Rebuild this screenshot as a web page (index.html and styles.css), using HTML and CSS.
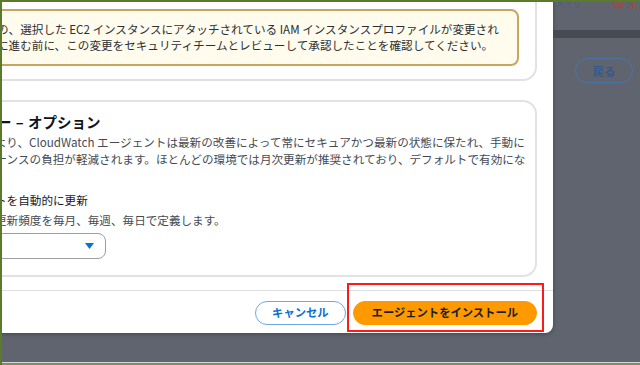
FILE: index.html
```html
<!DOCTYPE html>
<html lang="ja">
<head>
    <meta charset="UTF-8">
    <meta name="viewport" content="width=device-width, initial-scale=1.0">
    <title>エージェントのインストール</title>
    <link rel="stylesheet" href="styles.css">
</head>
<body>
    <div class="frame">
        <div class="stage">
            <!-- モーダル本体 (左側は画面外) -->
            <div class="modal">
                <div class="modal-body">
                    <div class="card card-alert">
                        <div class="alert">
                            <div class="ln">の、選択した EC2 インスタンスにアタッチされている IAM インスタンスプロファイルが変更され</div>
                            <div class="ln">に進む前に、この変更をセキュリティチームとレビューして承認したことを確認してください。</div>
                        </div>
                    </div>
                    <div class="card card-opt">
                        <h2 class="opt-title">ー – オプション</h2>
                        <p class="opt-desc">
                            <span class="ln">より、CloudWatch エージェントは最新の改善によって常にセキュアかつ最新の状態に保たれ、手動に</span>
                            <span class="ln">ナンスの負担が軽減されます。ほとんどの環境では月次更新が推奨されており、デフォルトで有効にな</span>
                        </p>
                        <div class="check-label ln">トを自動的に更新</div>
                        <div class="check-hint ln">更新頻度を毎月、毎週、毎日で定義します。</div>
                        <div class="select">
                            <svg class="caret" width="9" height="6" viewBox="0 0 9 6"><path d="M0 0h9L4.5 6z" fill="#0972d3"/></svg>
                        </div>
                    </div>
                </div>
                <div class="modal-footer">
                    <button class="btn btn-normal">キャンセル</button>
                    <button class="btn btn-primary">エージェントをインストール</button>
                    <div class="callout"></div>
                </div>
            </div>
            <!-- 背景のページ (暗くなっている) -->
            <div class="side">
                <div class="side-top">
                    <span>メイク</span>
                    <svg class="status-icon" width="12" height="12" viewBox="0 0 12 12"><circle cx="6" cy="6" r="5" fill="none" stroke="#a8453d" stroke-width="1.5"/><circle cx="6" cy="7" r="2" fill="#a8453d"/></svg>
                    <span class="status-text">未</span>
                </div>
                <div class="side-bar"></div>
                <button class="back-btn">戻る</button>
            </div>
        </div>
        <div class="frame-edge"></div>
    </div>
</body>
</html>
```

FILE: styles.css
```css
body{
    margin: 0;
    width: 640px; height: 365px; overflow: hidden;
    font-family: "Noto Sans CJK JP", "Noto Sans", sans-serif;
    background-color: #60646e;
}
.frame{ /* スクリーンショットの緑の枠 */
    height: 365px; box-sizing: border-box;
    border-top: 2px solid #5b7a2b; border-left: 2px solid #5b7a2b;
    display: flex; flex-direction: column;
}
.stage{
    flex: 1; display: flex; align-items: flex-start;
    overflow: hidden;
}
.frame-edge{
    height: 1px; background-color: #d3d5d8;
    border-bottom: 2px solid #808f5a;
}
.ln{ display: block; white-space: nowrap; }

/* モーダル */
.modal{
    flex: none; width: 592px;
    margin: -30px 0 0 -41px;
    background-color: #fff;
    border-radius: 0 0 8px 8px;
    box-shadow: 0 1px 4px rgba(0, 0, 0, .3);
}
.modal-body{ padding: 12px 16px 13px; }
.card{
    border: 2px solid #e1e2e7; border-radius: 14px;
    padding: 23px 16px 13px;
}
.card + .card{ margin-top: 19px; }
.alert{
    background-color: #fffcee;
    border: 2px solid #c9a65f; border-radius: 8px;
    padding: 11px 16px 11px 0;
    font-size: 11.6px; line-height: 15.5px; color: #2c2f33;
}
.card-opt{ padding: 10px 16px 16px; }
.opt-title{
    margin: 0 0 0 2px; white-space: nowrap; word-spacing: 1px;
    font-size: 14.5px; line-height: 20px; font-weight: 700; color: #0f141a;
}
.opt-desc{
    margin: 2px 0 0;
    font-size: 11.6px; line-height: 17px; color: #444a53;
}
.check-label{
    margin-top: 24px;
    font-size: 11.6px; line-height: 17px; color: #16191f;
}
.check-hint{
    margin-top: 3px;
    font-size: 11.6px; line-height: 17px; color: #444a53;
}
.select{
    margin-top: 4px; width: 111px; height: 26px; box-sizing: border-box;
    border: 1px solid #9a9ea6; border-radius: 8px;
    display: flex; justify-content: flex-end; align-items: center;
    padding-right: 11px;
}

/* フッター */
.modal-footer{
    position: relative;
    border-top: 1px solid #dcdee2;
    padding: 10px 16px 8px;
    display: flex; justify-content: flex-end; gap: 7px;
}
.btn{
    height: 24px; box-sizing: border-box; border-radius: 12px;
    font-family: inherit; font-weight: 700; font-size: 11.3px; line-height: 1;
    padding: 0 16px;
}
.btn-normal{
    background-color: #fff; border: 1.5px solid #6ea7e6; color: #0b6fcf;
}
.btn-primary{
    background-color: #ff9900; border: 1px solid #ff9900; color: #1b1d21;
    padding: 0 18px;
}
.callout{ /* 赤い注釈枠 */
    position: absolute; top: -8px; right: 9px;
    width: 197px; height: 49px; box-sizing: border-box;
    border: 2px solid #ff1a1a;
}

/* 右側の背景ページ */
.side{ flex: 1; align-self: stretch; }
.side-top{
    display: flex; align-items: center;
    height: 14px; margin-top: -6px; padding-left: 2px;
    font-size: 9px; color: #41618c;
}
.status-icon{ margin-left: 30px; }
.status-text{ margin-left: 4px; font-size: 10px; color: #a8453d; }
.side-bar{ height: 8px; margin-top: 20px; background-color: #474a52; }
.back-btn{
    display: block; margin: 20px 0 0 22px;
    width: 58px; height: 25px; box-sizing: border-box;
    border: 1.5px solid #4a74a8; border-radius: 13px;
    background-color: transparent; color: #36598c;
    font-family: inherit; font-weight: 700; font-size: 11.5px;
}
```
